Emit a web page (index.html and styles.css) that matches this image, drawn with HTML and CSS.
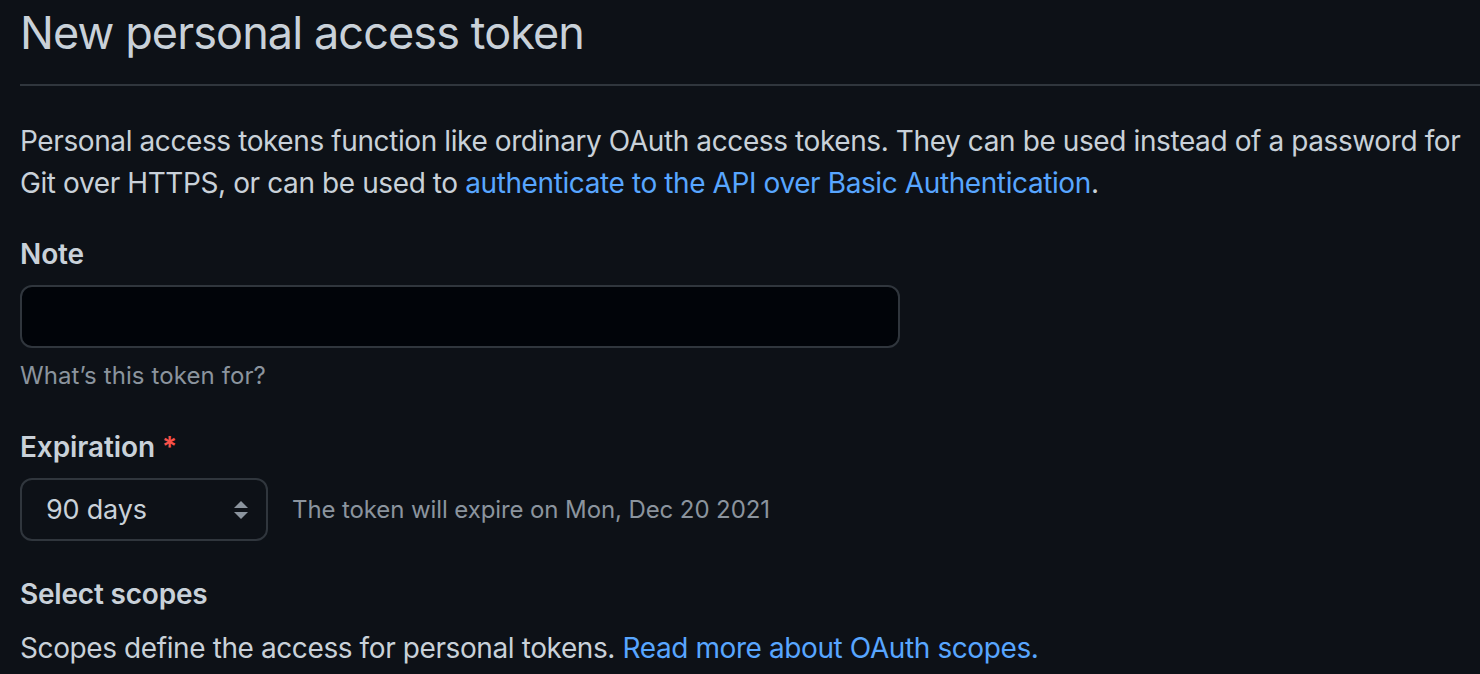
FILE: index.html
```html
<!DOCTYPE html>
<html lang="en">
<head>
<meta charset="utf-8">
<title>New personal access token</title>
<link rel="stylesheet" href="styles.css">
</head>
<body>
<main class="page">
  <div class="subhead">
    <h1 class="subhead-heading">New personal access token</h1>
  </div>
  <p class="intro">Personal access tokens function like ordinary OAuth access tokens. They can be used instead of a password for Git over HTTPS, or can be used to <a href="#" class="link">authenticate to the API over Basic Authentication</a>.</p>

  <div class="form-group">
    <label class="form-label" for="note">Note</label>
    <input class="form-input" id="note" type="text">
    <p class="form-note">What’s this token for?</p>
  </div>

  <div class="form-group form-group-exp">
    <label class="form-label" for="exp">Expiration <span class="required">*</span></label>
    <div class="exp-row">
      <div class="select" id="exp">
        <span class="select-value">90 days</span>
        <svg class="select-arrows" width="16" height="20" viewBox="0 0 16 20" aria-hidden="true">
          <path d="M8 1 L15 8 L1 8 Z" fill="#8b949e"/>
          <path d="M1 12 L15 12 L8 19 Z" fill="#8b949e"/>
        </svg>
      </div>
      <span class="exp-note">The token will expire on Mon, Dec 20 2021</span>
    </div>
  </div>

  <div class="scopes">
    <h3 class="scopes-title">Select scopes</h3>
    <p class="scopes-desc">Scopes define the access for personal tokens. <a href="#" class="link">Read more about OAuth scopes.</a></p>
  </div>
</main>
</body>
</html>
```

FILE: styles.css
```css
html, body {
  margin: 0;
  padding: 0;
  background: #0d1117;
}
body {
  font-family: Inter, "Noto Sans", "Liberation Sans", sans-serif;
  color: #c9d1d9;
  overflow: hidden;
}
.page {
  padding: 0 0 0 20px;
}
.subhead {
  border-bottom: 2px solid #30363d;
  padding-bottom: 18px;
  margin-bottom: 34px;
}
.subhead-heading {
  margin: 0;
  font-size: 45px;
  font-weight: 400;
  line-height: 66px;
  color: #c9d1d9;
  letter-spacing: -0.9px;
}
.intro {
  margin: 0;
  font-size: 28px;
  line-height: 42px;
  width: 1460px;
  letter-spacing: -0.4px;
}
.link {
  color: #58a6ff;
  text-decoration: none;
}
.form-group {
  margin-top: 29px;
}
.form-group-exp {
  margin-top: 32px;
}
.form-label {
  display: block;
  font-size: 28px;
  font-weight: 600;
  line-height: 42px;
  margin-bottom: 10px;
  letter-spacing: -0.1px;
}
.required {
  color: #f85149;
}
.form-input {
  display: block;
  box-sizing: border-box;
  width: 880px;
  height: 63px;
  background: #010409;
  border: 2px solid #30363d;
  border-radius: 12px;
  margin: 0;
  padding: 0 24px;
  outline: none;
}
.form-note {
  margin: 10px 0 0;
  font-size: 24px;
  line-height: 36px;
  color: #8b949e;
  letter-spacing: 0.1px;
}
.exp-row {
  display: flex;
  align-items: center;
  gap: 24px;
}
.select {
  box-sizing: border-box;
  width: 248px;
  height: 63px;
  border: 2px solid #30363d;
  border-radius: 12px;
  display: flex;
  align-items: center;
  justify-content: space-between;
  padding: 0 17px 0 24px;
}
.select-value {
  font-size: 27px;
  color: #c9d1d9;
  letter-spacing: -0.2px;
}
.select-arrows {
  display: block;
}
.exp-note {
  font-size: 24px;
  color: #8b949e;
  letter-spacing: -0.1px;
}
.scopes {
  margin-top: 32px;
}
.scopes-title {
  margin: 0;
  font-size: 28px;
  font-weight: 600;
  line-height: 42px;
  letter-spacing: -0.2px;
}
.scopes-desc {
  margin: 12px 0 0;
  font-size: 28px;
  line-height: 42px;
  letter-spacing: -0.4px;
}
```
